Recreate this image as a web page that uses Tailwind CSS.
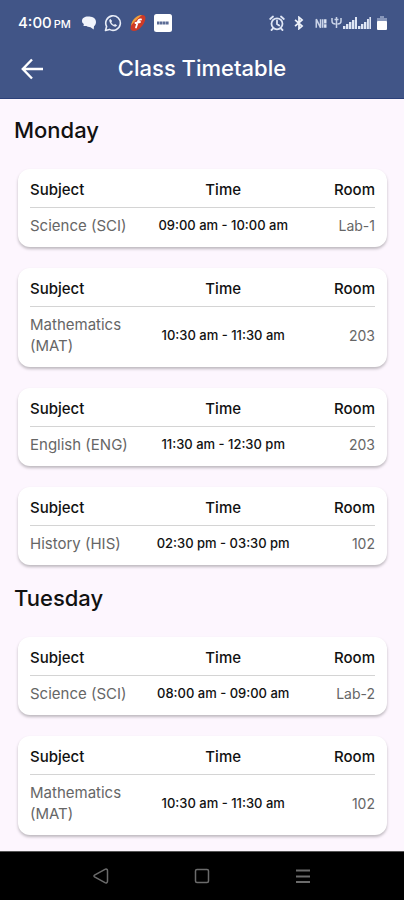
<!DOCTYPE html>
<html lang="en">
  <head>
    <meta charset="UTF-8" />
    <meta name="viewport" content="width=device-width, initial-scale=1.0" />
    <script src="https://cdn.jsdelivr.net/npm/@tailwindcss/browser@4"></script>
    <title>Class Timetable</title>
  </head>
  <body class="min-h-screen flex flex-col bg-[#fdf6fe] text-[#111] font-['Inter',sans-serif]">
    <header class="bg-[#415587] border-b border-[#2b4079] text-white">
      <!-- status bar -->
      <div class="flex justify-between items-center h-[46px] pl-[18px] pr-4">
        <div class="flex items-center">
          <div class="flex items-baseline gap-0.5 w-[63px] text-[15px] font-medium whitespace-nowrap">
            <span>4:00</span>
            <span class="text-[11px]">PM</span>
          </div>
          <svg class="w-4 h-4" viewBox="0 0 16 16" fill="#f1f4fb">
            <path d="M7 1.500c3.500 0 8 1 8 5.500 0 2-.8 3.300-2 4.200l-.3 3.300-3.200-2.300c-2 0-3.200-.5-4-1.200L2.500 11l.3-2C1.500 8.200 1 7.200 1 6c0-3 2.500-4.500 6-4.500z" />
          </svg>
          <svg class="w-[18px] h-[18px] ml-[7px]" viewBox="0 0 18 18" fill="none" stroke="#e8edf8" stroke-width="1.600">
            <path d="M1.500 16.500l1.100-4A7.300 7.300 0 1 1 5.400 15.400z" stroke-linejoin="round" />
            <path d="M6.300 4.800l-1 1.200c-.4 3 3.700 7 6.600 6.600l1.300-1.200-2-1.500-1.200.9c-1.200-.5-2.200-1.500-2.700-2.600l.8-1.200z" fill="#e8edf8" stroke="none" />
          </svg>
          <svg class="w-4 h-[18px] ml-2" viewBox="0 0 16 18">
            <path d="M12 1c4 0 4 3 2.500 7S8 17 4 17s-4-3-2.500-7S8 1 12 1z" fill="#cf3a25" />
            <path d="M12 1C7 1 2 5 .9 12c2-3 5-6 11.100-11z" fill="#f0a03c" />
            <path d="M11 5.500c-2-.3-2.700.8-3.200 2.500L6 13.500M5.500 9l4.500-1" fill="none" stroke="#fff" stroke-width="1.800" stroke-linecap="round" />
          </svg>
          <svg class="w-[18px] h-[18px] ml-2" viewBox="0 0 18 18">
            <rect width="18" height="18" rx="2.500" fill="#fff" />
            <path d="M3 9h12" stroke="#5b6c95" stroke-width="3" stroke-dasharray="2.600 .4" />
          </svg>
        </div>
        <div class="flex items-center">
          <svg class="w-4 h-4" viewBox="0 0 16 16" fill="none" stroke="#dfe6f5" stroke-width="1.800" stroke-linecap="round">
            <circle cx="8" cy="8.800" r="5.500" />
            <path d="M8 5.500v3.500l2.200 1.500M1.200 4L4 1.500M14.800 4L12 1.500M4 13.500l-1.500 1.500M12 13.500l1.500 1.500" />
          </svg>
          <svg class="w-3 h-[14px] ml-2" viewBox="0 0 12 16" fill="none" stroke="#eef2fa" stroke-width="2">
            <path d="M1.500 4.500l8 7L6 14.500v-13l3.500 3-8 7" />
          </svg>
          <svg class="w-3 h-[11px] ml-2.5" viewBox="0 0 14 12" fill="none" stroke="#c9d3e8" stroke-width="1.800">
            <path d="M1.500 11V1l5 10V1M9 1v10" />
            <path d="M12 1v5M12 7v4" stroke-width="2.800" stroke="#dfe6f5" />
          </svg>
          <svg class="w-10 h-3 ml-1" viewBox="0 0 40 12" fill="#dfe6f5">
            <path d="M1 1v3c0 2 1.500 3 3.500 3M5.500 0v11M10 1v3c0 2-1.500 3-3.500 3M3.500 2.500h4" fill="none" stroke="#c9d3e8" stroke-width="1.500" />
            <path d="M12 9h2.400v3H12zM15 7h2.400v5H15zM18 5h2.400v7H18zM21 3h2.400v9H21zM24 0h2v12h-2zM27 9h2.400v3H27zM30 7h2.400v5H30zM33 5h2.400v7H33zM36 2h1.900v10H36zM38.400 0H40v12h-1.600z" />
          </svg>
          <svg class="w-3 h-[14px] ml-[5px]" viewBox="0 0 12 14">
            <path d="M4 0h4v2h3v4H1V2h3z" fill="#8796ba" />
            <rect x="1" y="5" width="10" height="9" rx="1" fill="#fff" />
          </svg>
        </div>
      </div>
      <!-- app bar -->
      <div class="grid grid-cols-[64px_1fr_64px] items-center h-[45px] mb-[7px]">
        <button type="button" aria-label="Back" class="w-16 flex justify-center">
          <svg class="w-6 h-6" viewBox="0 0 24 24" fill="none" stroke="currentColor" stroke-width="2.400">
            <path d="M12 2.500L2.800 12l9.200 9.500M2.500 12H23" />
          </svg>
        </button>
        <h1 class="text-[22px] font-medium text-center whitespace-nowrap">Class Timetable</h1>
      </div>
    </header>

    <main class="grow px-3.5 pt-[15px] pb-4 flex flex-col gap-[17px]">
      <section>
        <h2 class="text-[22px] leading-8 font-medium mb-[23px]">Monday</h2>
        <div class="ml-1 mr-[3px] flex flex-col gap-[21px]">
          <div class="bg-white rounded-xl shadow-[0_2px_3px_rgba(0,0,0,0.25)] px-3 py-[11px]">
            <table class="w-full table-fixed text-[15px] leading-5">
              <thead>
                <tr class="border-b border-[#d4d4d4]">
                  <th class="w-[34%] pb-[7px] text-left font-medium">Subject</th>
                  <th class="w-[44%] pb-[7px] font-medium">Time</th>
                  <th class="pb-[7px] text-right font-medium">Room</th>
                </tr>
              </thead>
              <tbody>
                <tr class="leading-[21px]">
                  <td class="pt-[7px] text-[#666]">Science (SCI)</td>
                  <td class="pt-[7px] text-[13px] font-medium text-center whitespace-nowrap">09:00 am - 10:00 am</td>
                  <td class="pt-[7px] text-sm leading-[21px] text-right text-[#666]">Lab-1</td>
                </tr>
              </tbody>
            </table>
          </div>
          <div class="bg-white rounded-xl shadow-[0_2px_3px_rgba(0,0,0,0.25)] px-3 py-[11px]">
            <table class="w-full table-fixed text-[15px] leading-5">
              <thead>
                <tr class="border-b border-[#d4d4d4]">
                  <th class="w-[34%] pb-[7px] text-left font-medium">Subject</th>
                  <th class="w-[44%] pb-[7px] font-medium">Time</th>
                  <th class="pb-[7px] text-right font-medium">Room</th>
                </tr>
              </thead>
              <tbody>
                <tr class="leading-[21px]">
                  <td class="pt-[7px] text-[#666]">Mathematics (MAT)</td>
                  <td class="pt-[7px] text-[13px] font-medium text-center whitespace-nowrap">10:30 am - 11:30 am</td>
                  <td class="pt-[7px] text-sm leading-[21px] text-right text-[#666]">203</td>
                </tr>
              </tbody>
            </table>
          </div>
          <div class="bg-white rounded-xl shadow-[0_2px_3px_rgba(0,0,0,0.25)] px-3 py-[11px]">
            <table class="w-full table-fixed text-[15px] leading-5">
              <thead>
                <tr class="border-b border-[#d4d4d4]">
                  <th class="w-[34%] pb-[7px] text-left font-medium">Subject</th>
                  <th class="w-[44%] pb-[7px] font-medium">Time</th>
                  <th class="pb-[7px] text-right font-medium">Room</th>
                </tr>
              </thead>
              <tbody>
                <tr class="leading-[21px]">
                  <td class="pt-[7px] text-[#666]">English (ENG)</td>
                  <td class="pt-[7px] text-[13px] font-medium text-center whitespace-nowrap">11:30 am - 12:30 pm</td>
                  <td class="pt-[7px] text-sm leading-[21px] text-right text-[#666]">203</td>
                </tr>
              </tbody>
            </table>
          </div>
          <div class="bg-white rounded-xl shadow-[0_2px_3px_rgba(0,0,0,0.25)] px-3 py-[11px]">
            <table class="w-full table-fixed text-[15px] leading-5">
              <thead>
                <tr class="border-b border-[#d4d4d4]">
                  <th class="w-[34%] pb-[7px] text-left font-medium">Subject</th>
                  <th class="w-[44%] pb-[7px] font-medium">Time</th>
                  <th class="pb-[7px] text-right font-medium">Room</th>
                </tr>
              </thead>
              <tbody>
                <tr class="leading-[21px]">
                  <td class="pt-[7px] text-[#666]">History (HIS)</td>
                  <td class="pt-[7px] text-[13px] font-medium text-center whitespace-nowrap">02:30 pm - 03:30 pm</td>
                  <td class="pt-[7px] text-sm leading-[21px] text-right text-[#666]">102</td>
                </tr>
              </tbody>
            </table>
          </div>
        </div>
      </section>

      <section>
        <h2 class="text-[22px] leading-8 font-medium mb-[23px]">Tuesday</h2>
        <div class="ml-1 mr-[3px] flex flex-col gap-[21px]">
          <div class="bg-white rounded-xl shadow-[0_2px_3px_rgba(0,0,0,0.25)] px-3 py-[11px]">
            <table class="w-full table-fixed text-[15px] leading-5">
              <thead>
                <tr class="border-b border-[#d4d4d4]">
                  <th class="w-[34%] pb-[7px] text-left font-medium">Subject</th>
                  <th class="w-[44%] pb-[7px] font-medium">Time</th>
                  <th class="pb-[7px] text-right font-medium">Room</th>
                </tr>
              </thead>
              <tbody>
                <tr class="leading-[21px]">
                  <td class="pt-[7px] text-[#666]">Science (SCI)</td>
                  <td class="pt-[7px] text-[13px] font-medium text-center whitespace-nowrap">08:00 am - 09:00 am</td>
                  <td class="pt-[7px] text-sm leading-[21px] text-right text-[#666]">Lab-2</td>
                </tr>
              </tbody>
            </table>
          </div>
          <div class="bg-white rounded-xl shadow-[0_2px_3px_rgba(0,0,0,0.25)] px-3 py-[11px]">
            <table class="w-full table-fixed text-[15px] leading-5">
              <thead>
                <tr class="border-b border-[#d4d4d4]">
                  <th class="w-[34%] pb-[7px] text-left font-medium">Subject</th>
                  <th class="w-[44%] pb-[7px] font-medium">Time</th>
                  <th class="pb-[7px] text-right font-medium">Room</th>
                </tr>
              </thead>
              <tbody>
                <tr class="leading-[21px]">
                  <td class="pt-[7px] text-[#666]">Mathematics (MAT)</td>
                  <td class="pt-[7px] text-[13px] font-medium text-center whitespace-nowrap">10:30 am - 11:30 am</td>
                  <td class="pt-[7px] text-sm leading-[21px] text-right text-[#666]">102</td>
                </tr>
              </tbody>
            </table>
          </div>
        </div>
      </section>
    </main>

    <!-- system navigation -->
    <nav class="h-[49px] bg-black border-t border-[#555] flex justify-center items-center gap-[85px] text-[#6b6b6b]">
      <button type="button" aria-label="Back">
        <svg class="w-4 h-4" viewBox="0 0 16 16" fill="none" stroke="currentColor" stroke-width="1.500" stroke-linejoin="round">
          <path d="M1.500 7.200L12 1.300c1.200-.6 2.500 0 2.500 1.400v10.600c0 1.400-1.300 2-2.500 1.400L1.500 8.800c-.7-.5-.7-1.100 0-1.600z" />
        </svg>
      </button>
      <button type="button" aria-label="Home">
        <svg class="w-4 h-4" viewBox="0 0 16 16" fill="none" stroke="currentColor" stroke-width="1.500">
          <rect x="1.500" y="1.500" width="13" height="13" rx="1.500" />
        </svg>
      </button>
      <button type="button" aria-label="Recent apps">
        <svg class="w-4 h-4" viewBox="0 0 16 16" fill="none" stroke="currentColor" stroke-width="1.800">
          <path d="M1 2.500h14M1 8.500h14M1 14h14" />
        </svg>
      </button>
    </nav>
  </body>
</html>
